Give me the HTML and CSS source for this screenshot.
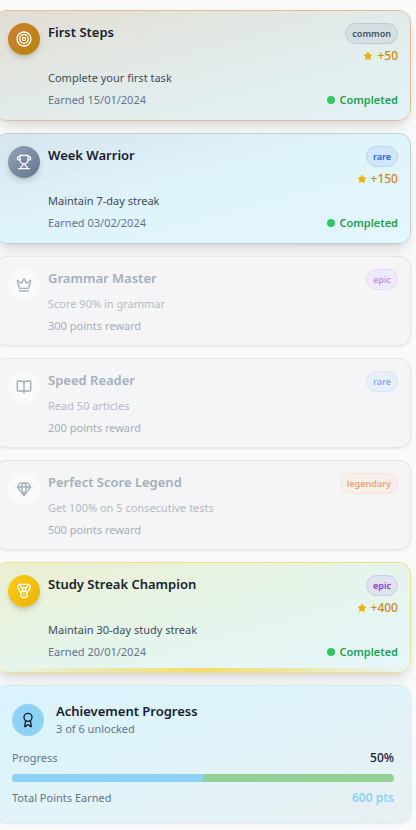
FILE: index.html
```html
<!DOCTYPE html>
<html lang="en">
<head>
<meta charset="utf-8">
<meta name="viewport" content="width=device-width, initial-scale=1">
<title>Achievements</title>
<link rel="stylesheet" href="styles.css">
</head>
<body>
<svg class="sprite" aria-hidden="true">
  <symbol id="star" viewBox="0 0 24 24"><path stroke="#eab308" stroke-width="2" stroke-linejoin="round" d="M12 2.500l2.900 6 6.600.9-4.800 4.600 1.200 6.600L12 17.500l-5.900 3.100 1.200-6.600L2.500 9.400l6.600-.9z"/></symbol>
</svg>
<main class="achievements">
  <article class="card unlocked bronze">
    <div class="medal"><svg class="icon" viewBox="0 0 24 24"><circle cx="12" cy="12" r="10.500"/><circle cx="12" cy="12" r="6.500"/><circle cx="12" cy="12" r="2.500"/></svg></div>
    <div class="body">
      <header class="head">
        <h3 class="title">First Steps</h3>
        <div class="meta"><span class="badge common">common</span><span class="points"><svg class="star"><use href="#star"/></svg>+50</span></div>
      </header>
      <p class="description">Complete your first task</p>
      <footer class="foot"><span>Earned 15/01/2024</span><span class="status">Completed</span></footer>
    </div>
  </article>

  <article class="card unlocked silver">
    <div class="medal"><svg class="icon" viewBox="0 0 24 24"><path d="M6 9H4.500a2.500 2.500 0 0 1 0-5H6M18 9h1.500a2.500 2.500 0 0 0 0-5H18M4 22h16M10 14.660V17c0 .550-.470.980-.970 1.210C7.850 18.750 7 20.240 7 22M14 14.660V17c0 .550.470.980.970 1.210C16.150 18.750 17 20.240 17 22M18 2H6v7a6 6 0 0 0 12 0V2Z"/></svg></div>
    <div class="body">
      <header class="head">
        <h3 class="title">Week Warrior</h3>
        <div class="meta"><span class="badge rare">rare</span><span class="points"><svg class="star"><use href="#star"/></svg>+150</span></div>
      </header>
      <p class="description">Maintain 7-day streak</p>
      <footer class="foot"><span>Earned 03/02/2024</span><span class="status">Completed</span></footer>
    </div>
  </article>

  <article class="card locked">
    <div class="medal"><svg class="icon" viewBox="0 0 24 24"><path d="M11.560 3.270a.5.5 0 0 1 .880 0L15.390 8.870a1 1 0 0 0 1.520.290L21.180 5.500a.5.5 0 0 1 .8.520l-2.830 10.250a1 1 0 0 1-.960.730H5.810a1 1 0 0 1-.960-.730L2.020 6.020a.5.5 0 0 1 .8-.520l4.270 3.660a1 1 0 0 0 1.520-.290zM5 21h14"/></svg></div>
    <div class="body">
      <header class="head">
        <h3 class="title">Grammar Master</h3>
        <div class="meta"><span class="badge epic">epic</span></div>
      </header>
      <p class="description">Score 90% in grammar</p>
      <footer class="foot"><span>300 points reward</span></footer>
    </div>
  </article>

  <article class="card locked">
    <div class="medal"><svg class="icon" viewBox="0 0 24 24"><path d="M12 7v14M3 18a1 1 0 0 1-1-1V4a1 1 0 0 1 1-1h5a4 4 0 0 1 4 4 4 4 0 0 1 4-4h5a1 1 0 0 1 1 1v13a1 1 0 0 1-1 1h-6a3 3 0 0 0-3 3 3 3 0 0 0-3-3z"/></svg></div>
    <div class="body">
      <header class="head">
        <h3 class="title">Speed Reader</h3>
        <div class="meta"><span class="badge rare">rare</span></div>
      </header>
      <p class="description">Read 50 articles</p>
      <footer class="foot"><span>200 points reward</span></footer>
    </div>
  </article>

  <article class="card locked">
    <div class="medal"><svg class="icon" viewBox="0 0 24 24"><path d="M6 3h12l4 6-10 13L2 9ZM11 3 8 9l4 13 4-13-3-6M2 9h20"/></svg></div>
    <div class="body">
      <header class="head">
        <h3 class="title">Perfect Score Legend</h3>
        <div class="meta"><span class="badge legendary">legendary</span></div>
      </header>
      <p class="description">Get 100% on 5 consecutive tests</p>
      <footer class="foot"><span>500 points reward</span></footer>
    </div>
  </article>

  <article class="card unlocked gold">
    <div class="medal"><svg class="icon" viewBox="0 0 24 24"><path d="M7.210 15 2.660 7.140a2 2 0 0 1 .130-2.200L4.400 2.800A2 2 0 0 1 6 2h12a2 2 0 0 1 1.600.8l1.600 2.140a2 2 0 0 1 .140 2.200L16.790 15M11 12 5.120 2.200M13 12l5.880-9.800M8 7h8"/><circle cx="12" cy="17" r="5"/><path d="M12 18v-2h-.5"/></svg></div>
    <div class="body">
      <header class="head">
        <h3 class="title">Study Streak Champion</h3>
        <div class="meta"><span class="badge epic">epic</span><span class="points"><svg class="star"><use href="#star"/></svg>+400</span></div>
      </header>
      <p class="description">Maintain 30-day study streak</p>
      <footer class="foot"><span>Earned 20/01/2024</span><span class="status">Completed</span></footer>
    </div>
  </article>

  <section class="card summary">
    <header class="summary-head">
      <div class="medal"><svg class="icon" viewBox="0 0 24 24"><path d="m15.480 12.890 1.510 8.530a.5.5 0 0 1-.810.470l-3.580-2.690a1 1 0 0 0-1.200 0l-3.590 2.690a.5.5 0 0 1-.810-.470l1.520-8.530"/><circle cx="12" cy="8" r="6"/></svg></div>
      <div>
        <h3 class="title">Achievement Progress</h3>
        <p class="subtitle">3 of 6 unlocked</p>
      </div>
    </header>
    <div class="row"><span id="progress-label">Progress</span><span class="percent">50%</span></div>
    <div class="bar" role="progressbar" aria-labelledby="progress-label" aria-valuemin="0" aria-valuemax="100" aria-valuenow="50"><div class="fill" style="width: 50%"></div></div>
    <div class="row"><span>Total Points Earned</span><span class="total">600 pts</span></div>
  </section>
</main>
</body>
</html>
```
FILE: styles.css
```css
* {
  box-sizing: border-box;
}

body {
  margin: 0;
  overflow-x: hidden;
  background: #fafafa;
  color: #18202e;
  font: 11px/16px "Segoe UI", "Noto Sans", "Open Sans", sans-serif;
}

h3,
p {
  margin: 0;
}

.sprite {
  display: none;
}

.achievements {
  display: flex;
  flex-direction: column;
  gap: 12px;
  margin: 0 5px 0 -5px;
  padding: 10px 0 6px;
}

.card {
  position: relative;
  display: flex;
  gap: 8px;
  padding: 12px;
  border: 1px solid #e5e5ea;
  border-radius: 12px;
  overflow: hidden;
  box-shadow: 0 1px 3px rgb(0 0 0 / 8%);
}

.unlocked {
  box-shadow: 0 10px 15px -3px rgb(0 0 0 / 10%), 0 4px 6px -4px rgb(0 0 0 / 10%);
}

.bronze {
  border-color: #dfbf9b;
  background: linear-gradient(to bottom right, #e3ddd2, #e2ebea 50%, #e2f2f6);
}

.silver {
  border-color: #bdcfe2;
  background: linear-gradient(to bottom right, #d6e5ee, #e0f4fc 50%, #e4f6fe);
}

.gold {
  border-color: #efdf8c;
  background: linear-gradient(to bottom right, #ecefd0, #e5f5eb 50%, #e6f6fb);
}

.gold::after {
  content: "";
  position: absolute;
  inset: auto 0 0;
  height: 4px;
  background: linear-gradient(90deg, transparent, #f3dc68, transparent);
}

.locked {
  background: #f5f5f8;
}

.medal {
  display: grid;
  flex: none;
  place-items: center;
  width: 32px;
  height: 32px;
  border-radius: 50%;
  color: #fff;
}

.unlocked .medal {
  box-shadow: 0 4px 6px -1px rgb(0 0 0 / 14%), 0 2px 4px -2px rgb(0 0 0 / 12%);
}

.bronze .medal {
  background: linear-gradient(135deg, #cd7f32, #b8860b);
}

.silver .medal {
  background: linear-gradient(135deg, #94a3b8, #64748b);
}

.gold .medal {
  background: linear-gradient(135deg, #facc15, #eab308);
}

.locked .medal {
  background: #fafafa;
  color: #a4aebb;
}

.icon {
  width: 16px;
  height: 16px;
  fill: none;
  stroke: currentColor;
  stroke-width: 2;
  stroke-linecap: round;
  stroke-linejoin: round;
}

.body {
  flex: 1;
  min-width: 0;
}

.head {
  display: flex;
  justify-content: space-between;
  gap: 8px;
}

.title {
  font-size: 13px;
  font-weight: 600;
  line-height: 18px;
}

.meta {
  display: flex;
  flex-direction: column;
  align-items: flex-end;
  gap: 4px;
}

.badge {
  padding: 2px 6px;
  border: 1px solid;
  border-radius: 11px;
  font-size: 9px;
  font-weight: 600;
  line-height: 15px;
}

.common {
  border-color: #bdcacf;
  background: #d5dfe1;
  color: #475569;
}

.rare {
  border-color: #b5d3fb;
  background: #d2e6fb;
  color: #2563eb;
}

.epic {
  border-color: #d3c8ec;
  background: #e0e2ef;
  color: #9333ea;
}

.points {
  display: flex;
  align-items: center;
  gap: 4px;
  color: #ca8a1b;
  font-size: 12px;
  font-weight: 500;
}

.star {
  width: 10px;
  height: 10px;
  fill: #eab308;
}

.description {
  margin: 4px 0;
  color: #414b59;
  line-height: 20px;
}

.foot {
  display: flex;
  justify-content: space-between;
  color: #64748b;
}

.status {
  display: flex;
  align-items: center;
  gap: 4px;
  color: #22a152;
  font-weight: 600;
}

.status::before {
  content: "";
  width: 8px;
  height: 8px;
  border-radius: 50%;
  background: #2fc868;
}

.locked .title {
  color: #a4aebb;
}

.locked .description {
  color: #b4bac6;
}

.locked .foot {
  color: #a4aebb;
  line-height: 15px;
}

.locked .rare {
  border-color: #d8e5f8;
  background: #e9eff8;
  color: #86a9f3;
}

.locked .epic {
  border-color: #e8daf7;
  background: #f0ebf8;
  color: #c391f1;
}

.locked .legendary {
  border-color: #f8e4d5;
  background: linear-gradient(90deg, #f6f1e8, #f6eeea);
  color: #f1a27a;
}

.summary {
  flex-direction: column;
  padding: 16px;
  border-color: #cdedfc;
  background: linear-gradient(to bottom right, #d9f3fe, #e1f4f9 50%, #e8eff0);
}

.summary-head {
  display: flex;
  align-items: center;
  gap: 12px;
  min-height: 36px;
  margin-bottom: 4px;
}

.summary .medal {
  background: #8cd3f5;
  color: #18202e;
}

.subtitle,
.row {
  color: #64748b;
}

.subtitle {
  line-height: 18px;
}

.row {
  display: flex;
  justify-content: space-between;
}

.bar {
  height: 8px;
  border-radius: 4px;
  overflow: hidden;
  background: #94d196;
}

.fill {
  height: 100%;
  background: #8cd3f5;
}

.percent {
  color: #18202e;
  font-size: 12px;
  font-weight: 500;
}

.total {
  color: #8cd3f5;
  font-size: 12px;
  font-weight: 600;
}
```
